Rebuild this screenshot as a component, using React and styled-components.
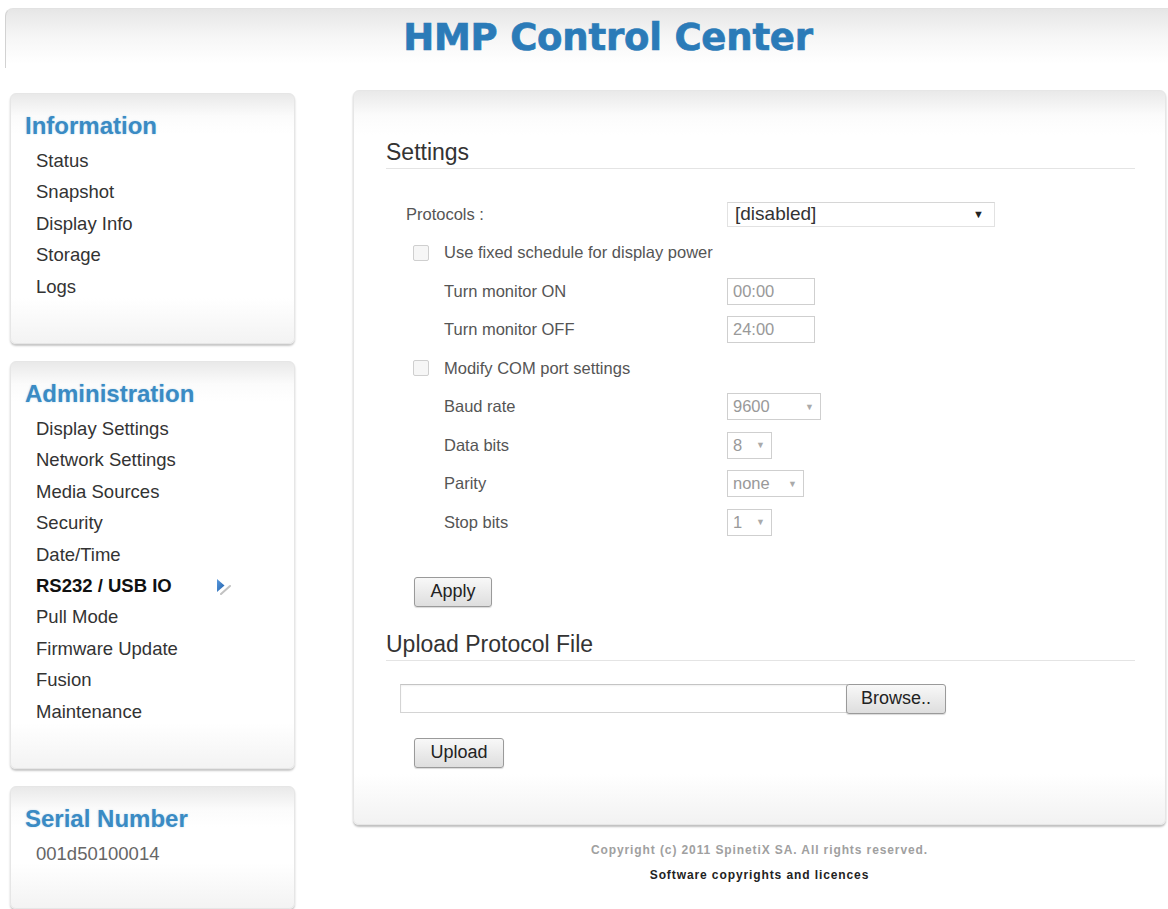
import React from 'react'
import styled, { createGlobalStyle } from 'styled-components'

const GlobalStyle = createGlobalStyle`
  html, body {
    margin: 0;
    padding: 0;
    background: #fff;
    overflow-x: hidden;
  }
  body {
    font-family: 'Liberation Sans', Arial, sans-serif;
    color: #333;
  }
`

const Header = styled.div`
  margin: 8px 0 0 5px;
  height: 60px;
  border-top-left-radius: 8px;
  border-top: 1px solid #e2e2e2;
  border-left: 1px solid #d2d2d2;
  background: linear-gradient(to bottom, #e6e6e6 0, #f6f6f6 28px, #fff 55px);
  box-sizing: border-box;
  padding-left: 42px;
  text-align: center;
`

const Title = styled.h1`
  margin: 0;
  font-family: 'DejaVu Sans', Verdana, sans-serif;
  font-weight: bold;
  font-size: 37px;
  line-height: 58px;
  color: #2b7bb8;
  -webkit-text-stroke: 0.7px #2b7bb8;
  letter-spacing: -0.2px;
`

const Content = styled.div`
  display: flex;
  align-items: flex-start;
  gap: 58px;
  padding-left: 10px;
  margin-top: 22px;
`

const Sidebar = styled.div`
  width: 285px;
  margin-top: 3px;
  display: flex;
  flex-direction: column;
  gap: 17px;
`

const Box = styled.div`
  box-sizing: border-box;
  border: 1px solid #e6e6e6;
  border-radius: 6px;
  background: linear-gradient(
    to bottom,
    #e9e9e9 0,
    #fbfbfb 22px,
    #fff 40px,
    #fff calc(100% - 45px),
    #f3f3f3 100%
  );
  box-shadow: 0 2px 2px rgba(0, 0, 0, 0.22);
  padding: ${(p) => p.$pad || '17px 14px 41px 14px'};
`

const BoxTitle = styled.h2`
  margin: 0 0 4px 0;
  font-size: 24px;
  line-height: 30px;
  font-weight: bold;
  color: #3a8bc4;
  text-shadow: 0 0 2px rgba(58, 139, 196, 0.35);
`

const NavItem = styled.div`
  display: flex;
  align-items: center;
  padding-left: 11px;
  font-size: 18.5px;
  line-height: 31.4px;
  color: ${(p) => (p.$active ? '#111' : '#333')};
  font-weight: ${(p) => (p.$active ? 'bold' : 'normal')};
  cursor: pointer;
`

const ActiveArrow = styled.svg`
  margin-left: 42px;
  width: 18px;
  height: 18px;
`

const SerialValue = styled.div`
  padding-left: 11px;
  font-size: 18.5px;
  line-height: 31.4px;
  color: #666;
`

const MainColumn = styled.div`
  width: 813px;
`

const Panel = styled.div`
  box-sizing: border-box;
  border: 1px solid #e6e6e6;
  border-radius: 6px;
  background: linear-gradient(
    to bottom,
    #e9e9e9 0,
    #fbfbfb 24px,
    #fff 44px,
    #fff calc(100% - 50px),
    #f2f2f2 100%
  );
  box-shadow: 0 2px 2px rgba(0, 0, 0, 0.25);
  padding: 47px 30px 56px 32px;
`

const SectionTitle = styled.h3`
  margin: ${(p) => p.$margin || '0'};
  font-size: 23px;
  font-weight: normal;
  line-height: 28px;
  color: #333;
  padding-bottom: 2px;
  border-bottom: 1px solid #e4e4e4;
`

const Form = styled.div`
  padding-left: 20px;
  margin-top: 26px;
`

const Row = styled.div`
  display: grid;
  grid-template-columns: 321px auto;
  align-items: center;
  height: 38.5px;
`

const Label = styled.div`
  padding-left: ${(p) => p.$indent || 0}px;
  font-size: 16.5px;
  color: #555;
`

const CheckRow = styled.div`
  display: flex;
  align-items: center;
  gap: 15px;
  height: 38.5px;
  padding-left: 7px;
  font-size: 16.5px;
  color: #555;
`

const Checkbox = styled.span`
  display: inline-block;
  width: 14px;
  height: 14px;
  border: 1px solid #cfcfcf;
  border-radius: 2px;
  background: #f6f6f6;
`

const ProtocolSelect = styled.div`
  box-sizing: border-box;
  width: 268px;
  height: 25px;
  display: flex;
  align-items: center;
  justify-content: space-between;
  padding: 0 10px 0 7px;
  border: 1px solid #e2e2e2;
  border-top-color: #d6d6d6;
  font-size: 19px;
  color: #333;
  background: #fff;
`

const Caret = styled.span`
  font-size: ${(p) => p.$size || 10}px;
  color: ${(p) => p.$color || '#222'};
`

const TimeInput = styled.div`
  box-sizing: border-box;
  width: 88px;
  height: 27px;
  display: flex;
  align-items: center;
  padding-left: 5px;
  border: 1px solid #cfcfcf;
  font-size: 16.5px;
  color: #999;
  background: #fff;
`

const SmallSelect = styled.div`
  box-sizing: border-box;
  width: ${(p) => p.$width}px;
  height: 27px;
  display: flex;
  align-items: center;
  justify-content: space-between;
  padding: 0 6px 0 5px;
  border: 1px solid #cfcfcf;
  font-size: 16.5px;
  color: #999;
  background: #fff;
`

const Button = styled.button`
  box-sizing: border-box;
  height: 30px;
  width: ${(p) => p.$width}px;
  margin: ${(p) => p.$margin || '0'};
  padding: 0;
  font-family: 'Liberation Sans', Arial, sans-serif;
  font-size: 18px;
  color: #222;
  border: 1px solid #9a9a9a;
  border-radius: 3px;
  background: linear-gradient(to bottom, #f8f8f8, #dedede);
  box-shadow: 0 1px 1px rgba(0, 0, 0, 0.15);
  cursor: pointer;
`

const FileRow = styled.div`
  display: flex;
  align-items: center;
  margin: 23px 0 0 14px;
`

const FileInput = styled.div`
  box-sizing: border-box;
  width: 448px;
  height: 29px;
  border: 1px solid #d4d4d4;
  border-top-color: #c4c4c4;
  box-shadow: inset 0 1px 2px rgba(0, 0, 0, 0.06);
  background: #fff;
`

const Footer = styled.div`
  margin-top: 13px;
  text-align: center;
  font-size: 12px;
  font-weight: bold;
  letter-spacing: 0.9px;
  line-height: 25px;
`

const Copyright = styled.div`
  color: #a0a0a0;
`

const Licences = styled.div`
  color: #222;
`

const infoItems = ['Status', 'Snapshot', 'Display Info', 'Storage', 'Logs']
const adminItems = [
  'Display Settings',
  'Network Settings',
  'Media Sources',
  'Security',
  'Date/Time',
  'RS232 / USB IO',
  'Pull Mode',
  'Firmware Update',
  'Fusion',
  'Maintenance',
]

const App = () => {
  return (
    <>
      <GlobalStyle />
      <Header>
        <Title>HMP Control Center</Title>
      </Header>
      <Content>
        <Sidebar>
          <Box>
            <BoxTitle>Information</BoxTitle>
            {infoItems.map((item) => (
              <NavItem key={item}>{item}</NavItem>
            ))}
          </Box>
          <Box>
            <BoxTitle>Administration</BoxTitle>
            {adminItems.map((item) => {
              const active = item === 'RS232 / USB IO'
              return (
                <NavItem key={item} $active={active}>
                  {item}
                  {active && (
                    <ActiveArrow viewBox="0 0 18 18">
                      <defs>
                        <linearGradient id="arrowFill" x1="0" y1="0" x2="1" y2="1">
                          <stop offset="0" stopColor="#5b9be0" />
                          <stop offset="1" stopColor="#1f5fa8" />
                        </linearGradient>
                      </defs>
                      <polygon points="3,2 10.5,8.5 3,15" fill="url(#arrowFill)" />
                      <line x1="7" y1="17" x2="16" y2="9" stroke="#c2c2c2" strokeWidth="2" strokeLinecap="round" />
                    </ActiveArrow>
                  )}
                </NavItem>
              )
            })}
          </Box>
          <Box $pad="17px 14px 38px 14px">
            <BoxTitle>Serial Number</BoxTitle>
            <SerialValue>001d50100014</SerialValue>
          </Box>
        </Sidebar>

        <MainColumn>
          <Panel>
            <SectionTitle>Settings</SectionTitle>
            <Form>
              <Row>
                <Label>Protocols :</Label>
                <ProtocolSelect>
                  [disabled]
                  <Caret $size={11}>▼</Caret>
                </ProtocolSelect>
              </Row>
              <CheckRow>
                <Checkbox />
                Use fixed schedule for display power
              </CheckRow>
              <Row>
                <Label $indent={38}>Turn monitor ON</Label>
                <TimeInput>00:00</TimeInput>
              </Row>
              <Row>
                <Label $indent={38}>Turn monitor OFF</Label>
                <TimeInput>24:00</TimeInput>
              </Row>
              <CheckRow>
                <Checkbox />
                Modify COM port settings
              </CheckRow>
              <Row>
                <Label $indent={38}>Baud rate</Label>
                <SmallSelect $width={94}>
                  9600
                  <Caret $size={9} $color="#aaa">▼</Caret>
                </SmallSelect>
              </Row>
              <Row>
                <Label $indent={38}>Data bits</Label>
                <SmallSelect $width={45}>
                  8
                  <Caret $size={9} $color="#aaa">▼</Caret>
                </SmallSelect>
              </Row>
              <Row>
                <Label $indent={38}>Parity</Label>
                <SmallSelect $width={77}>
                  none
                  <Caret $size={9} $color="#aaa">▼</Caret>
                </SmallSelect>
              </Row>
              <Row>
                <Label $indent={38}>Stop bits</Label>
                <SmallSelect $width={45}>
                  1
                  <Caret $size={9} $color="#aaa">▼</Caret>
                </SmallSelect>
              </Row>
              <Button $width={78} $margin="35px 0 0 8px">
                Apply
              </Button>
            </Form>

            <SectionTitle $margin="23px 0 0 0">Upload Protocol File</SectionTitle>
            <FileRow>
              <FileInput />
              <Button $width={100} $margin="0 0 0 -2px">
                Browse..
              </Button>
            </FileRow>
            <Button $width={90} $margin="24px 0 0 28px">
              Upload
            </Button>
          </Panel>
          <Footer>
            <Copyright>Copyright (c) 2011 SpinetiX SA. All rights reserved.</Copyright>
            <Licences>Software copyrights and licences</Licences>
          </Footer>
        </MainColumn>
      </Content>
    </>
  )
}

export default App
